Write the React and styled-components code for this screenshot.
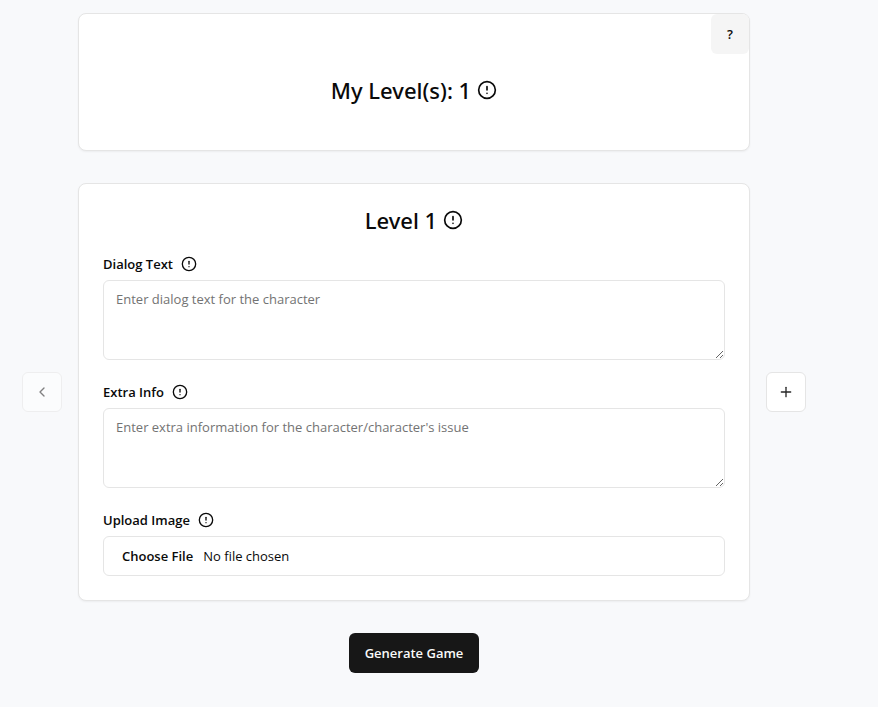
import React from "react";
import styled, { createGlobalStyle } from "styled-components";
import { ChevronLeft, CircleAlert, Plus } from "lucide-react";

const GlobalStyle = createGlobalStyle`
  *, *::before, *::after { box-sizing: border-box; }
  body {
    margin: 0;
    background: #f8f9fb;
    color: #0a0a0a;
    font-family: "Segoe UI", "Open Sans", "Noto Sans", sans-serif;
    font-size: 13px;
    line-height: 20px;
  }
  button, input, textarea { font: inherit; color: inherit; }
`;

const Page = styled.main`
  display: flex;
  flex-direction: column;
  align-items: center;
  gap: 32px;
  padding: 13px 72px 32px 22px;
`;

const Row = styled.div`
  display: flex;
  align-items: center;
  justify-content: center;
  gap: 16px;
  width: 100%;
`;

const Card = styled.section`
  flex: 1;
  min-width: 0;
  max-width: 672px;
  background: #fff;
  border: 1px solid #e5e5e5;
  border-radius: 8px;
  box-shadow: 0 1px 2px rgba(0, 0, 0, 0.05);
`;

const SummaryCard = styled(Card)`
  display: grid;
  grid-template-areas: "stack";
`;

const SummaryBody = styled.div`
  grid-area: stack;
  padding: 64px 24px 48px;
`;

const LevelForm = styled.form`
  display: flex;
  flex-direction: column;
  gap: 24px;
  padding: 24px;
`;

const Heading = styled.h2`
  display: flex;
  align-items: center;
  justify-content: center;
  gap: 6px;
  margin: 0;
  font-family: "Segoe UI", "Noto Sans", sans-serif;
  font-size: 22px;
  font-weight: 500;
  line-height: 24px;
`;

const Field = styled.div`
  display: flex;
  flex-direction: column;
  gap: 8px;
`;

const Label = styled.label`
  display: flex;
  align-items: center;
  gap: 8px;
  font-weight: 600;
  line-height: 16px;
`;

const TextArea = styled.textarea`
  display: block;
  width: 100%;
  height: 80px;
  padding: 8px 12px;
  background: #fff;
  border: 1px solid #e5e5e5;
  border-radius: 6px;
  resize: vertical;
  &::placeholder { color: #737373; opacity: 1; }
`;

const FileInput = styled.input`
  width: 100%;
  height: 40px;
  padding: 8px 12px;
  background: #fff;
  border: 1px solid #e5e5e5;
  border-radius: 6px;
  line-height: 22px;
  &::file-selector-button {
    padding: 0 6px;
    border: 0;
    background: transparent;
    color: inherit;
    font: inherit;
    font-weight: 600;
  }
`;

const Button = styled.button`
  display: inline-flex;
  align-items: center;
  justify-content: center;
  height: 40px;
  padding: 0 16px;
  border: 0;
  border-radius: 6px;
  font-weight: 600;
  cursor: pointer;
`;

const PrimaryButton = styled(Button)`
  background: #171717;
  color: #fafafa;
`;

const HelpButton = styled(Button)`
  grid-area: stack;
  place-self: start end;
  background: #f5f5f5;
`;

const IconButton = styled(Button)`
  flex: none;
  width: 40px;
  padding: 0;
  background: #fff;
  border: 1px solid #e5e5e5;
  &:disabled { opacity: 0.5; cursor: default; }
`;

const fields = [
  { id: "dialog", label: "Dialog Text", placeholder: "Enter dialog text for the character" },
  { id: "extra", label: "Extra Info", placeholder: "Enter extra information for the character/character's issue" },
];

export default function App() {
  return (
    <>
      <GlobalStyle />
      <Page>
        <Row>
          <SummaryCard>
            <SummaryBody>
              <Heading>My Level(s): 1 <CircleAlert size={20} /></Heading>
            </SummaryBody>
            <HelpButton type="button">?</HelpButton>
          </SummaryCard>
        </Row>
        <Row>
          <IconButton type="button" aria-label="Previous level" disabled>
            <ChevronLeft size={16} />
          </IconButton>
          <Card>
            <LevelForm id="level-form">
              <Heading>Level 1 <CircleAlert size={20} /></Heading>
              {fields.map((field) => (
                <Field key={field.id}>
                  <Label htmlFor={field.id}>{field.label} <CircleAlert size={16} /></Label>
                  <TextArea id={field.id} placeholder={field.placeholder} />
                </Field>
              ))}
              <Field>
                <Label htmlFor="image">Upload Image <CircleAlert size={16} /></Label>
                <FileInput id="image" type="file" accept="image/*" />
              </Field>
            </LevelForm>
          </Card>
          <IconButton type="button" aria-label="Add level">
            <Plus size={16} color="#262626" />
          </IconButton>
        </Row>
        <PrimaryButton type="submit" form="level-form">Generate Game</PrimaryButton>
      </Page>
    </>
  );
}
